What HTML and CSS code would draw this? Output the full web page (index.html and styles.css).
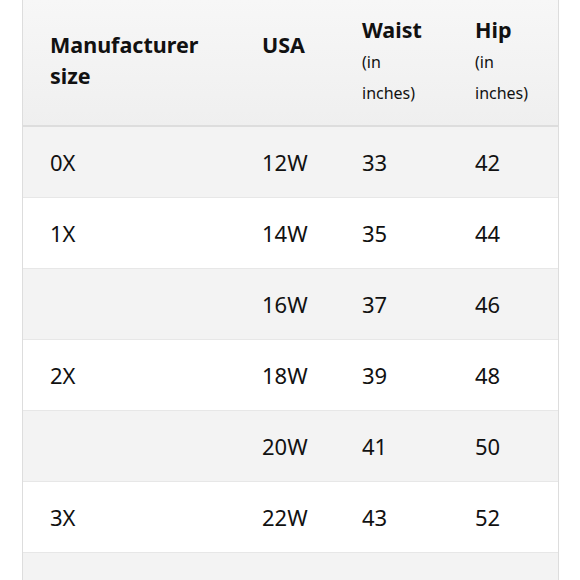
FILE: index.html
```html
<!DOCTYPE html>
<html>
<head>
<meta charset="utf-8">
<link rel="stylesheet" href="styles.css">
</head>
<body>
<div class="table">
  <div class="row head">
    <div class="cell"><span class="h">Manufacturer size</span></div>
    <div class="cell"><span class="h">USA</span><span class="h blank">&nbsp;</span></div>
    <div class="cell tall"><span class="h">Waist</span><span class="sub">(in inches)</span></div>
    <div class="cell tall"><span class="h">Hip</span><span class="sub">(in inches)</span></div>
  </div>
  <div class="row alt"><div class="cell">0X</div><div class="cell">12W</div><div class="cell">33</div><div class="cell">42</div></div>
  <div class="row"><div class="cell">1X</div><div class="cell">14W</div><div class="cell">35</div><div class="cell">44</div></div>
  <div class="row alt"><div class="cell"></div><div class="cell">16W</div><div class="cell">37</div><div class="cell">46</div></div>
  <div class="row"><div class="cell">2X</div><div class="cell">18W</div><div class="cell">39</div><div class="cell">48</div></div>
  <div class="row alt"><div class="cell"></div><div class="cell">20W</div><div class="cell">41</div><div class="cell">50</div></div>
  <div class="row"><div class="cell">3X</div><div class="cell">22W</div><div class="cell">43</div><div class="cell">52</div></div>
  <div class="row alt"><div class="cell"></div><div class="cell"></div><div class="cell"></div><div class="cell"></div></div>
</div>
</body>
</html>
```
FILE: styles.css
```css
html, body {
  margin: 0;
  padding: 0;
  background: #fff;
}
body {
  font-family: "Noto Sans", "Open Sans", sans-serif;
  color: #111;
}
.table {
  margin-left: 22px;
  width: 535px;
  border-left: 1px solid #ddd;
  border-right: 1px solid #ddd;
}
.row {
  display: grid;
  grid-template-columns: 212px 100px 113px 110px;
  height: 70px;
  border-bottom: 1px solid #e7e7e7;
  background: #fff;
}
.row.alt {
  background: #f3f3f3;
}
.row.head {
  height: 125px;
  border-bottom: 2px solid #ddd;
  background: linear-gradient(#f7f7f7, #efefef);
}
.cell {
  padding: 0 25px 0 27px;
  display: flex;
  flex-direction: column;
  justify-content: center;
  font-size: 22px;
  line-height: 31px;
}
.head .cell {
  padding-bottom: 5px;
}
.head .cell.tall {
  padding-bottom: 3px;
}
.h {
  font-weight: 700;
  font-size: 21.5px;
}
.sub {
  font-size: 16px;
  line-height: 31px;
  margin-top: 2px;
}
```
